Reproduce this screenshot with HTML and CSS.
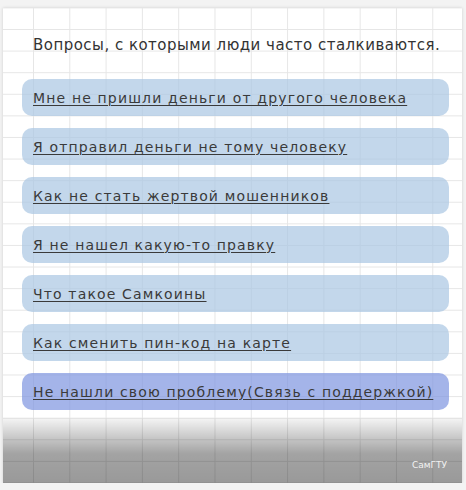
FILE: index.html
```html
<!DOCTYPE html>
<html lang="ru">
<head>
<meta charset="utf-8">
<title>Вопросы</title>
<link rel="stylesheet" href="styles.css">
</head>
<body>
<div class="panel">
  <h1 class="title">Вопросы, с которыми люди часто сталкиваются.</h1>
  <div class="list">
    <a class="item" href="#">Мне не пришли деньги от другого человека</a>
    <a class="item" href="#">Я отправил деньги не тому человеку</a>
    <a class="item" href="#">Как не стать жертвой мошенников</a>
    <a class="item" href="#">Я не нашел какую-то правку</a>
    <a class="item" href="#">Что такое Самкоины</a>
    <a class="item" href="#">Как сменить пин-код на карте</a>
    <a class="item item-support" href="#">Не нашли свою проблему(Связь с поддержкой)</a>
  </div>
  <div class="footer"><span class="brand">СамГТУ</span></div>
</div>
</body>
</html>
```
FILE: styles.css
```css
html, body {
  margin: 0;
  padding: 0;
}
body {
  background: #f3f3f3;
  font-family: "DejaVu Sans", sans-serif;
}
.panel {
  margin: 8px 4px 0 3px;
  width: 459px;
  height: 475px;
  box-sizing: border-box;
  display: flex;
  flex-direction: column;
  background-color: #ffffff;
  background-image:
    linear-gradient(to right, #e6e6e6 1px, transparent 1px),
    linear-gradient(to bottom, #e6e6e6 1px, transparent 1px);
  background-size: 36.3px 21.6px;
  background-position: 30px 21px;
  box-shadow: 0 0 3px rgba(0, 0, 0, 0.15);
}
.title {
  margin: 0;
  padding: 28px 0 0 30px;
  font-size: 15px;
  line-height: 18px;
  font-weight: normal;
  color: #333;
  letter-spacing: 0.48px;
  white-space: nowrap;
}
.list {
  margin-top: 25px;
  padding: 0 13px 0 19px;
  display: flex;
  flex-direction: column;
  gap: 12px;
}
.item {
  height: 37px;
  display: flex;
  align-items: center;
  padding-left: 11px;
  border-radius: 10px;
  background: rgba(170, 198, 226, 0.7);
  color: #3a3a3a;
  font-size: 14px;
  letter-spacing: 1.15px;
  white-space: nowrap;
  text-decoration: underline;
  text-decoration-thickness: 1px;
  text-underline-offset: 2px;
}
.item-support {
  background: rgba(125, 148, 224, 0.7);
}
.footer {
  margin-top: auto;
  height: 65px;
  display: flex;
  justify-content: flex-end;
  align-items: flex-end;
  padding: 0 15px 13px 0;
  box-sizing: border-box;
  background: linear-gradient(to bottom, rgba(0, 0, 0, 0.04), rgba(0, 0, 0, 0.36) 55%, rgba(0, 0, 0, 0.4));
}
.brand {
  color: #f2f2f2;
  font-size: 9px;
  line-height: 10px;
}
```
